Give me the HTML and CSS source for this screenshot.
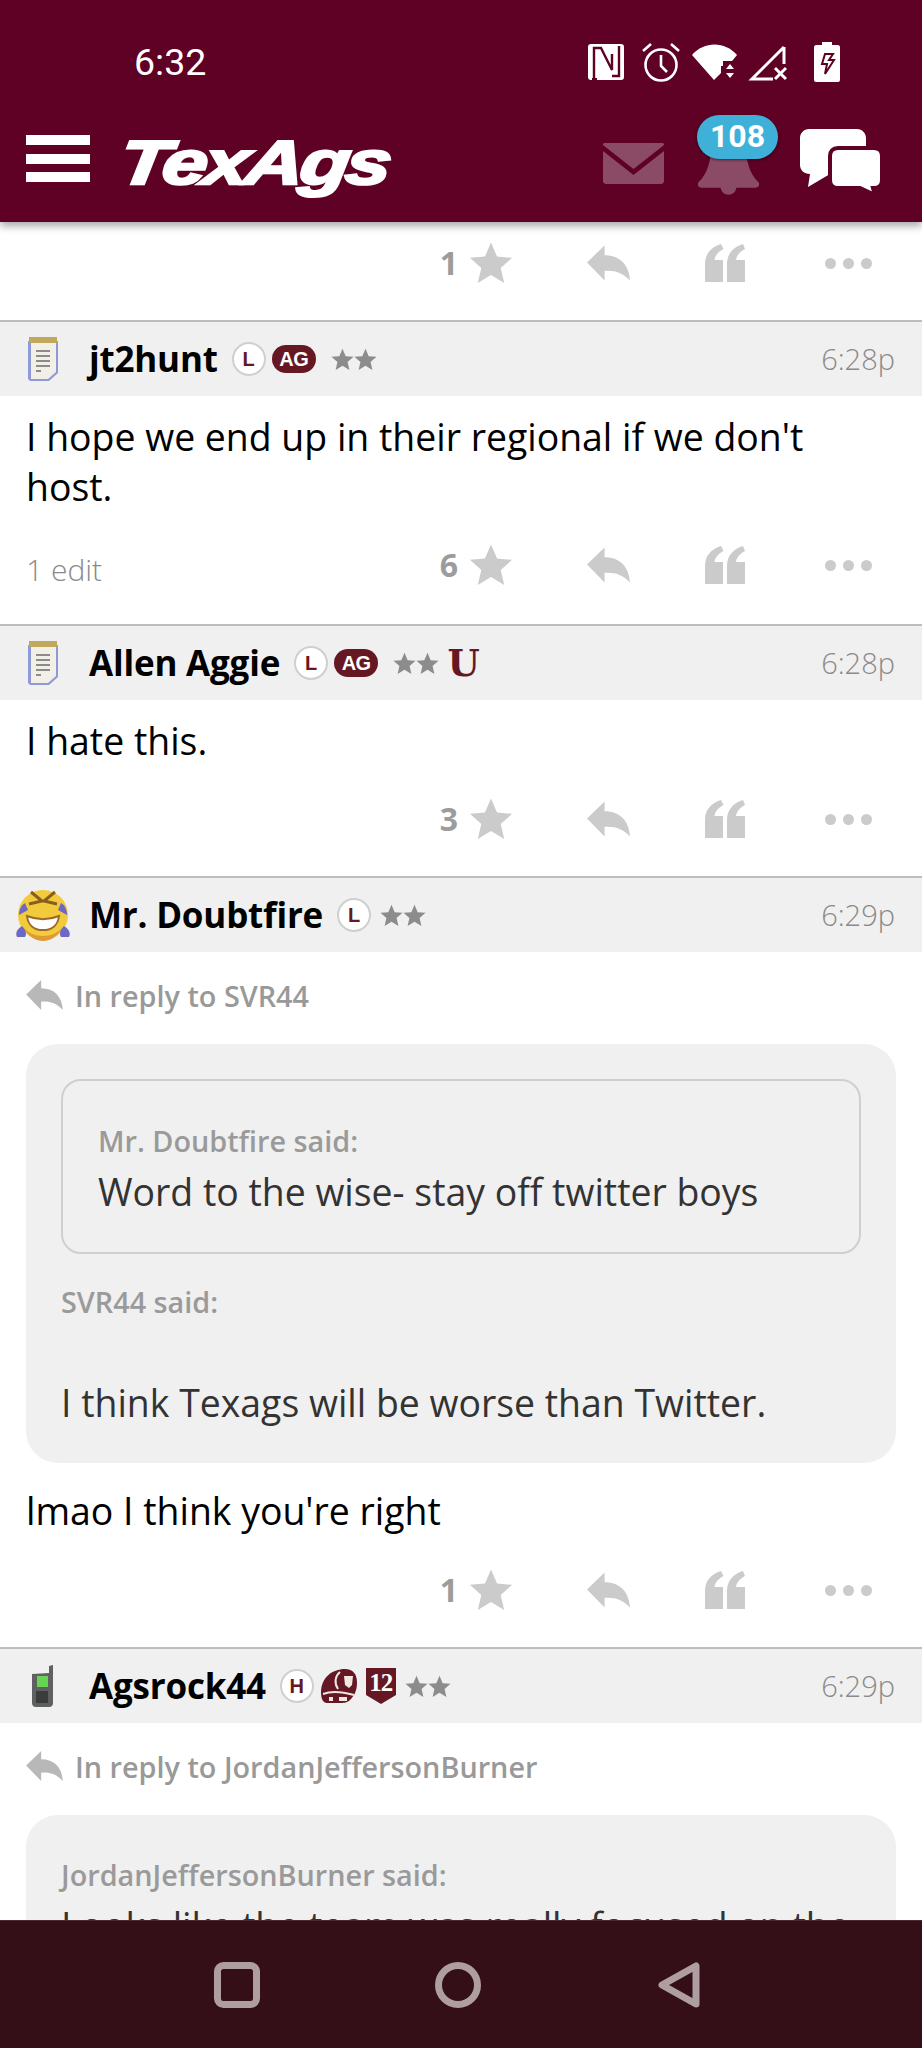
FILE: index.html
```html
<!DOCTYPE html>
<html lang="en">
<head>
<meta charset="utf-8">
<title>TexAgs</title>
<link rel="stylesheet" href="styles.css">
</head>
<body>
<svg class="defs" width="0" height="0" aria-hidden="true">
  <symbol id="star" viewBox="0 0 24 24"><path d="M12 .8l3.300 7.700 8.200.7-6.200 5.500 1.900 8.200-7.200-4.400-7.200 4.400 1.900-8.200L.5 9.200l8.200-.7z"/></symbol>
  <symbol id="reply" viewBox="0 0 44 36"><path d="M0 17.500L18 0v10C34 10 43 20 44 36 37 28 28 25 18 26v10z"/></symbol>
  <symbol id="quote" viewBox="0 0 40 38"><path d="M0 38V20C0 10 6 3 16 0l2.500 5C13.500 7.500 10 11.500 9.500 16H18v22zM22 38V20C22 10 28 3 38 0l2 5c-5 2.500-8.500 6.500-9 11H40v22z"/></symbol>
  <symbol id="note" viewBox="0 0 32 46">
    <path fill="#8f99d8" d="M1 5h30v32l-9 8H3l-2-2z"/>
    <path fill="#f1efe6" d="M4 6h25v30l-8 7H4z"/>
    <path fill="#c2a85c" d="M2 1h28v6H2z"/>
    <path fill="#8b8b8b" d="M9 14h14v2H9zM9 19h14v2H9zM9 24h14v2H9zM9 29h14v2H9zM9 34h5v2H9z"/>
  </symbol>
  <symbol id="phone" viewBox="0 0 24 42">
    <path fill="#5f6160" d="M1 9l17-1V1l4-1v38c0 2-1 4-4 4H5c-3 0-4-2-4-4z"/>
    <path fill="#64d654" d="M6 11h11v11H6z"/>
    <path fill="#3b3d3c" d="M5 26h12v12H5z"/>
  </symbol>
  <symbol id="laugh" viewBox="0 0 56 54">
    <circle cx="28" cy="27" r="25" fill="#f2cb3d"/>
    <path fill="#e09a35" d="M7 38c6 10 13 15 21 15s15-5 21-15c-6 7-13 10-21 10S13 45 7 38z"/>
    <path fill="#fff" stroke="#9c6a24" stroke-width="2" d="M12 28c10 4 22 4 32 0-1 9-7 14-16 14s-15-5-16-14z"/>
    <path fill="none" stroke="#8a5d1f" stroke-width="3" d="M16 4l11 9-13 3M40 4L29 13l13 3"/>
    <path fill="#6c68c4" d="M2 49c-2-4 0-8 5-11 4 4 5 8 3 11zM54 49c2-4 0-8-5-11-4 4-5 8-3 11zM4 27c0-5 2-10 6-12l3 7zM52 27c0-5-2-10-6-12l-3 7z"/>
  </symbol>
  <symbol id="helmet" viewBox="0 0 38 36">
    <path fill="#651824" d="M1 24C1 10 12 1 25 1c8 0 12 5 12 14 0 8-3 13-7 17-3 3-7 3-11 3H7c-4 0-6-4-6-11z"/>
    <path fill="none" stroke="#f0e7e4" stroke-width="2" d="M20 4c-5 4-6 11-2 17M3 26c8-3 20-2 31 1"/>
    <path fill="#f0e7e4" d="M24 8h9l-1 9-3 3-4-3z"/>
    <path fill="#f0e7e4" d="M9 29h4v4H9zM19 29h8v4h-8z"/>
  </symbol>
  <symbol id="shield" viewBox="0 0 30 36">
    <path fill="#651824" d="M0 0h30v27l-15 9-15-9z"/>
  </symbol>
</svg>

<header class="app-header">
  <div class="status-bar">
    <span class="clock">6:32</span>
    <div class="status-icons">
      <svg class="si-nfc" viewBox="0 0 36 36"><rect width="36" height="36" rx="3" fill="#fff"/><path fill="none" stroke="#5f0025" stroke-width="2.400" d="M6 34V4h7l11 22V10M9 4h4M24 32h7V2"/><path fill="#5f0025" d="M4 34h5v2H4z"/></svg>
      <svg class="si-alarm" viewBox="0 0 38 40"><circle cx="19" cy="23" r="15.500" fill="none" stroke="#fff" stroke-width="2.600"/><path fill="none" stroke="#fff" stroke-width="2.600" d="M19 13v11l6 6M1 9l8-7M37 9l-8-7"/></svg>
      <svg class="si-wifi" viewBox="0 0 45 36"><path fill="#fff" d="M0 11C12-3 33-3 45 11l-9 11H29v7l-7 7z"/><path fill="#5f0025" d="M31 17h14v19H31z"/><path fill="#fff" d="M38 20l4 5h-8zM34 29h8l-4 5z"/></svg>
      <svg class="si-signal" viewBox="0 0 39 38"><path fill="none" stroke="#fff" stroke-width="3" d="M36 4L4 36h21M36 4v17"/><path fill="none" stroke="#fff" stroke-width="3" d="M27 25l11 11M38 25L27 36"/></svg>
      <svg class="si-batt" viewBox="0 0 26 40"><path fill="#fff" d="M8 0h10v3h6c1 0 2 1 2 2v33c0 1-1 2-2 2H2c-1 0-2-1-2-2V5c0-1 1-2 2-2h6z"/><path fill="none" stroke="#5f0025" stroke-width="2" d="M11 12h8l-4 6h5l-9 14 2-10H8z"/></svg>
    </div>
  </div>
  <div class="toolbar">
    <div class="burger"><i></i><i></i><i></i></div>
    <span class="logo">TexAgs</span>
    <div class="tools">
      <svg class="t-mail" viewBox="0 0 61 41"><path fill="#8b4b66" d="M1 0h59l1 1v1L30.500 26 0 2V1zM0 8l30.500 24L61 8v31l-2 2H2l-2-2z"/></svg>
      <div class="bell-wrap">
        <svg class="t-bell" viewBox="0 0 62 46"><path fill="#8b4b66" d="M14 0h34c2 11 3 24 14 34 1 3-1 5-4 5H39c-1 5-4 7-8 7s-7-2-8-7H4c-3 0-5-2-4-5C11 24 12 11 14 0z"/></svg>
        <span class="badge">108</span>
      </div>
      <svg class="t-chat" viewBox="0 0 82 66"><path fill="#fff" d="M9 0h48c5 0 9 4 9 9v27c0 5-4 9-9 9H30L8 58l2-13C4 45 0 41 0 36V9c0-5 4-9 9-9z"/><path fill="#fff" stroke="#5f0025" stroke-width="4" d="M38 19h36c5 0 8 3 8 8v24c0 5-3 8-8 8h-1l2 7-15-7H38c-5 0-8-3-8-8V27c0-5 3-8 8-8z"/></svg>
    </div>
  </div>
</header>

<main class="thread">
  <div class="actions">
    <span class="count">1</span>
    <svg class="a-star"><use href="#star"/></svg>
    <svg class="a-reply"><use href="#reply"/></svg>
    <svg class="a-quote"><use href="#quote"/></svg>
    <div class="a-dots"><i></i><i></i><i></i></div>
  </div>

  <article class="post post-edited">
    <div class="post-head">
      <div class="avatar"><svg class="av-note"><use href="#note"/></svg></div>
      <span class="name">jt2hunt</span>
      <span class="letter">L</span>
      <span class="ag">AG</span>
      <span class="stars stars-sep"><svg><use href="#star"/></svg><svg><use href="#star"/></svg></span>
      <span class="time">6:28p</span>
    </div>
    <div class="post-body"><p class="text">I hope we end up in their regional if we don't host.</p></div>
    <div class="actions">
      <span class="edit">1 edit</span>
      <span class="count">6</span>
      <svg class="a-star"><use href="#star"/></svg>
      <svg class="a-reply"><use href="#reply"/></svg>
      <svg class="a-quote"><use href="#quote"/></svg>
      <div class="a-dots"><i></i><i></i><i></i></div>
    </div>
  </article>

  <article class="post">
    <div class="post-head">
      <div class="avatar"><svg class="av-note"><use href="#note"/></svg></div>
      <span class="name">Allen Aggie</span>
      <span class="letter">L</span>
      <span class="ag">AG</span>
      <span class="stars stars-sep"><svg><use href="#star"/></svg><svg><use href="#star"/></svg></span>
      <span class="u-mark">U</span>
      <span class="time">6:28p</span>
    </div>
    <div class="post-body"><p class="text">I hate this.</p></div>
    <div class="actions">
      <span class="count">3</span>
      <svg class="a-star"><use href="#star"/></svg>
      <svg class="a-reply"><use href="#reply"/></svg>
      <svg class="a-quote"><use href="#quote"/></svg>
      <div class="a-dots"><i></i><i></i><i></i></div>
    </div>
  </article>

  <article class="post">
    <div class="post-head">
      <div class="avatar"><svg class="av-laugh"><use href="#laugh"/></svg></div>
      <span class="name">Mr. Doubtfire</span>
      <span class="letter">L</span>
      <span class="stars"><svg><use href="#star"/></svg><svg><use href="#star"/></svg></span>
      <span class="time">6:29p</span>
    </div>
    <div class="post-body post-body-reply">
      <div class="reply-to"><svg><use href="#reply"/></svg><span>In reply to SVR44</span></div>
      <div class="quote">
        <div class="quote-inner">
          <div class="said">Mr. Doubtfire said:</div>
          <p class="quote-text">Word to the wise- stay off twitter boys</p>
        </div>
        <div class="said said-outer">SVR44 said:</div>
        <p class="quote-text quote-text-spaced">I think Texags will be worse than Twitter.</p>
      </div>
      <p class="text">lmao I think you're right</p>
    </div>
    <div class="actions">
      <span class="count">1</span>
      <svg class="a-star"><use href="#star"/></svg>
      <svg class="a-reply"><use href="#reply"/></svg>
      <svg class="a-quote"><use href="#quote"/></svg>
      <div class="a-dots"><i></i><i></i><i></i></div>
    </div>
  </article>

  <article class="post">
    <div class="post-head">
      <div class="avatar"><svg class="av-phone"><use href="#phone"/></svg></div>
      <span class="name">Agsrock44</span>
      <span class="letter">H</span>
      <svg class="helmet"><use href="#helmet"/></svg>
      <span class="twelve"><svg><use href="#shield"/></svg><b>12</b></span>
      <span class="stars"><svg><use href="#star"/></svg><svg><use href="#star"/></svg></span>
      <span class="time">6:29p</span>
    </div>
    <div class="post-body post-body-reply">
      <div class="reply-to"><svg><use href="#reply"/></svg><span>In reply to JordanJeffersonBurner</span></div>
      <div class="quote">
        <div class="said">JordanJeffersonBurner said:</div>
        <p class="quote-text">Looks like the team was really focused on the</p>
      </div>
    </div>
  </article>
</main>

<nav class="nav-bar">
  <svg class="nav-square" viewBox="0 0 46 46"><rect x="3.500" y="3.500" width="39" height="39" rx="6" fill="none" stroke="#ae9da1" stroke-width="7"/></svg>
  <svg class="nav-circle" viewBox="0 0 46 46"><circle cx="23" cy="23" r="19.500" fill="none" stroke="#ae9da1" stroke-width="7"/></svg>
  <svg class="nav-back" viewBox="0 0 42 46"><path d="M38 4v38L4 23z" fill="none" stroke="#ae9da1" stroke-width="7" stroke-linejoin="round"/></svg>
</nav>
</body>
</html>
```
FILE: styles.css
```css
* { box-sizing: border-box; }
html, body { margin: 0; padding: 0; height: 2048px; overflow: hidden; background: #fff; }
body { font-family: "Open Sans", "Liberation Sans", sans-serif; color: #000; position: relative; }
p { margin: 0; }
.defs { position: absolute; }

.app-header {
  position: absolute; top: 0; left: 0; right: 0; height: 222px; z-index: 5;
  background: #5f0025; color: #fff;
  box-shadow: 0 4px 8px rgba(0, 0, 0, .35);
  display: flex; flex-direction: column;
}
.status-bar { height: 124px; display: flex; align-items: center; padding: 0 82px 0 134px; }
.clock { font-family: Roboto, sans-serif; font-size: 37.500px; line-height: 1; margin-top: 1px; }
.status-icons { margin-left: auto; display: flex; align-items: center; }
.status-icons svg { display: block; }
.si-nfc { width: 36px; height: 36px; margin-right: 18px; }
.si-alarm { width: 38px; height: 40px; margin-right: 12px; }
.si-wifi { width: 45px; height: 36px; margin-right: 11px; }
.si-signal { width: 39px; height: 38px; margin-right: 27px; }
.si-batt { width: 26px; height: 40px; }

.toolbar { flex: 1; display: flex; align-items: flex-start; padding-left: 26px; }
.burger { width: 64px; height: 47px; margin-top: 11px; display: flex; flex-direction: column; justify-content: space-between; }
.burger i { display: block; height: 10px; background: #fff; }
.logo {
  margin: 6px 0 0 30px; font-family: "Liberation Sans", sans-serif; font-weight: 700; font-style: italic;
  font-size: 62px; line-height: 66px; letter-spacing: -3px; color: #fff;
  -webkit-text-stroke: 2.500px #fff; display: inline-block;
  transform: scaleX(1.315) skewX(-6deg); transform-origin: left center;
}
.tools { position: absolute; top: 0; left: 0; right: 0; height: 222px; pointer-events: none; }
.tools svg { position: absolute; display: block; }
.t-mail { left: 603px; top: 143px; width: 61px; height: 41px; }
.bell-wrap { position: absolute; left: 698px; top: 115px; width: 80px; height: 82px; }
.bell-wrap .t-bell { left: 0; top: 34px; width: 61px; height: 46px; }
.badge {
  position: absolute; left: -1px; top: 0; width: 81px; height: 44px; border-radius: 22px;
  background: #3fb0d8; color: #fff; font: 700 32px/42px Roboto, sans-serif; text-align: center;
  box-shadow: 0 1px 3px rgba(0, 0, 0, .5);
}
.t-chat { left: 800px; top: 129px; width: 82px; height: 66px; }

.thread { padding-top: 233px; }

.post { border-top: 2px solid #bdbdbd; }
.post-head { height: 74px; background: #f0f0f0; display: flex; align-items: center; padding-right: 27px; }
.avatar { width: 85px; margin-right: 4px; display: flex; justify-content: center; align-items: center; flex: none; filter: blur(.5px); }
.avatar svg { display: block; }
.av-note { width: 32px; height: 46px; }
.av-laugh { width: 56px; height: 54px; }
.av-phone { width: 24px; height: 42px; }
.name { font-size: 35px; font-weight: 700; line-height: 44px; letter-spacing: -.2px; }
.letter {
  width: 34px; height: 34px; border-radius: 50%; border: 2px solid #cfcfcf; background: #fff;
  color: #651824; font: 700 20px/30px "Liberation Sans", sans-serif; text-align: center; margin-left: 14px; flex: none;
}
.ag {
  width: 44px; height: 28px; border-radius: 14px; background: #651824; color: #fff;
  font: 700 20px/28px "Liberation Sans", sans-serif; letter-spacing: -.5px; text-align: center; margin-left: 6px; flex: none;
}
.stars { display: flex; margin-left: 9px; flex: none; }
.stars-sep { margin-left: 15px; }
.stars svg { width: 23px; height: 23px; fill: #8c8c8c; display: block; }
.u-mark { font: 700 37px/40px "DejaVu Serif", serif; color: #651824; margin-left: 11px; width: 27px; display: flex; justify-content: center; }
.helmet { width: 38px; height: 36px; margin-left: 6px; flex: none; }
.twelve { position: relative; width: 30px; height: 36px; margin-left: 8px; flex: none; }
.twelve svg { width: 30px; height: 36px; display: block; }
.twelve b {
  position: absolute; left: 0; right: 0; top: 2px; text-align: center; color: #fff;
  font: 700 25px/26px "Liberation Serif", serif; letter-spacing: -1px;
}
.time { margin-left: auto; font-size: 29px; font-weight: 300; color: #8a8a8a; line-height: 40px; }

.post-body { padding: 16px 26px 23px; }
.post-body-reply { padding-top: 15px; padding-bottom: 24px; }
.text { font-size: 37.400px; line-height: 50px; }
.post-edited .actions { height: 89px; padding-bottom: 29px; }

.actions { height: 87px; padding-bottom: 27px; display: flex; align-items: center; padding-left: 26px; }
.edit { font-size: 30px; font-weight: 300; color: #8a8a8a; position: absolute; margin-top: 8px; }
.count { margin-left: auto; font-size: 32px; font-weight: 700; color: #9c9c9c; line-height: 40px; }
.a-star { width: 44px; height: 44px; margin-left: 11px; fill: #cbcbcb; }
.a-reply { width: 43px; height: 36px; margin-left: 74px; fill: #cbcbcb; }
.a-quote { width: 40px; height: 38px; margin-left: 75px; fill: #cbcbcb; }
.a-dots { display: flex; gap: 7px; margin-left: 80px; margin-right: 50px; }
.a-dots i { display: block; width: 11px; height: 11px; border-radius: 50%; background: #cbcbcb; }

.reply-to { display: flex; align-items: center; height: 40px; margin: 8px 0 29px; color: #999; font-size: 28.800px; font-weight: 600; }
.reply-to svg { width: 37px; height: 30px; fill: #b8b8b8; margin-right: 12px; flex: none; }
.quote { background: #f0f0f0; border-radius: 32px; padding: 35px; margin-bottom: 23px; }
.quote-inner { border: 2px solid #cfcfcf; border-radius: 20px; padding: 40px 35px 35px; margin-bottom: 28px; }
.said { color: #9a9a9a; font-size: 28.800px; font-weight: 600; line-height: 40px; margin-bottom: 6px; }
.said-outer { margin-bottom: 0; }
.quote-text { color: #333; font-size: 37.400px; line-height: 50px; }
.quote-text-spaced { margin-top: 56px; }
.quote > .said:first-child { margin-top: 5px; }

.nav-bar {
  position: absolute; left: 0; right: 0; top: 1920px; height: 128px; z-index: 5;
  background: #350f18; border-top: 1px solid #4d2a32;
}
.nav-bar svg { position: absolute; top: 41px; display: block; }
.nav-square { left: 214px; width: 46px; height: 46px; }
.nav-circle { left: 435px; width: 46px; height: 46px; }
.nav-back { left: 658px; width: 42px; height: 46px; }
```
